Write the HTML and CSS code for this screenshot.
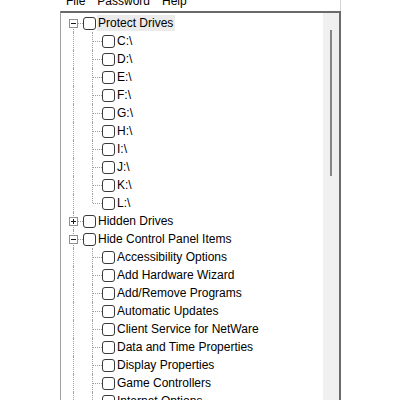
FILE: index.html
```html
<!DOCTYPE html>
<html>
<head>
<meta charset="utf-8">
<link rel="stylesheet" href="styles.css">
</head>
<body>
<div class="window">
  <div class="menubar">
    <div class="menu-inner"><span class="mi">File</span><span class="mi">Password</span><span class="mi">Help</span></div>
  </div>
  <div class="tree">
    <div class="nodes">
      <div class="row"><span class="g exp first"><i class="box minus"></i></span><span class="cb"></span><span class="lbl sel">Protect Drives</span></div>
      <div class="row"><span class="g v"></span><span class="g tee"></span><span class="cb"></span><span class="lbl">C:\</span></div>
      <div class="row"><span class="g v"></span><span class="g tee"></span><span class="cb"></span><span class="lbl">D:\</span></div>
      <div class="row"><span class="g v"></span><span class="g tee"></span><span class="cb"></span><span class="lbl">E:\</span></div>
      <div class="row"><span class="g v"></span><span class="g tee"></span><span class="cb"></span><span class="lbl">F:\</span></div>
      <div class="row"><span class="g v"></span><span class="g tee"></span><span class="cb"></span><span class="lbl">G:\</span></div>
      <div class="row"><span class="g v"></span><span class="g tee"></span><span class="cb"></span><span class="lbl">H:\</span></div>
      <div class="row"><span class="g v"></span><span class="g tee"></span><span class="cb"></span><span class="lbl">I:\</span></div>
      <div class="row"><span class="g v"></span><span class="g tee"></span><span class="cb"></span><span class="lbl">J:\</span></div>
      <div class="row"><span class="g v"></span><span class="g tee"></span><span class="cb"></span><span class="lbl">K:\</span></div>
      <div class="row"><span class="g v"></span><span class="g elbow"></span><span class="cb"></span><span class="lbl">L:\</span></div>
      <div class="row"><span class="g exp mid"><i class="box plus"></i></span><span class="cb"></span><span class="lbl">Hidden Drives</span></div>
      <div class="row"><span class="g exp mid"><i class="box minus"></i></span><span class="cb"></span><span class="lbl">Hide Control Panel Items</span></div>
      <div class="row"><span class="g v"></span><span class="g tee"></span><span class="cb"></span><span class="lbl">Accessibility Options</span></div>
      <div class="row"><span class="g v"></span><span class="g tee"></span><span class="cb"></span><span class="lbl">Add Hardware Wizard</span></div>
      <div class="row"><span class="g v"></span><span class="g tee"></span><span class="cb"></span><span class="lbl">Add/Remove Programs</span></div>
      <div class="row"><span class="g v"></span><span class="g tee"></span><span class="cb"></span><span class="lbl">Automatic Updates</span></div>
      <div class="row"><span class="g v"></span><span class="g tee"></span><span class="cb"></span><span class="lbl">Client Service for NetWare</span></div>
      <div class="row"><span class="g v"></span><span class="g tee"></span><span class="cb"></span><span class="lbl">Data and Time Properties</span></div>
      <div class="row"><span class="g v"></span><span class="g tee"></span><span class="cb"></span><span class="lbl">Display Properties</span></div>
      <div class="row"><span class="g v"></span><span class="g tee"></span><span class="cb"></span><span class="lbl">Game Controllers</span></div>
      <div class="row"><span class="g v"></span><span class="g tee"></span><span class="cb"></span><span class="lbl">Internet Options</span></div>
    </div>
    <div class="scroll"><div class="thumb"></div></div>
  </div>
</div>
</body>
</html>
```
FILE: styles.css
```css
html, body {
  margin: 0;
  padding: 0;
  background: #ffffff;
  height: 400px;
  overflow: hidden;
}
body {
  font-family: "Liberation Sans", Arial, sans-serif;
  font-size: 12px;
  color: #000;
}
.window {
  margin-left: 60px;
  width: 281px;
  height: 400px;
  display: flex;
  flex-direction: column;
}
.menubar {
  height: 11px;
  overflow: hidden;
  border-right: 1px solid #d4d4d4;
  box-sizing: border-box;
  background: #fff;
}
.menu-inner {
  margin-top: -6px;
  line-height: 15px;
  display: flex;
}
.mi {
  padding: 0 6px;
}
.tree {
  flex: 1;
  display: flex;
  border-top: 2px solid #6a6a6a;
  border-left: 1px solid #a0a0a0;
  border-right: 2px solid #6a6a6a;
  overflow: hidden;
}
.nodes {
  flex: 1;
  padding-left: 3px;
  padding-top: 1px;
  display: flex;
  flex-direction: column;
}
.row {
  height: 18px;
  display: flex;
  align-items: flex-start;
  flex: none;
}
.g {
  width: 19px;
  height: 18px;
  position: relative;
  flex: none;
}
.g::before, .g::after {
  content: "";
  position: absolute;
}
.g.v::before, .g.tee::before, .g.exp.mid::before {
  left: 9px; top: 0; height: 18px;
  border-left: 1px dotted #a0a0a0;
}
.g.elbow::before {
  left: 9px; top: 0; height: 9px;
  border-left: 1px dotted #a0a0a0;
}
.g.exp.first::before {
  left: 9px; top: 10px; height: 8px;
  border-left: 1px dotted #a0a0a0;
}
.g.v::after { display: none; }
.g.tee::after, .g.elbow::after, .g.exp::after {
  left: 10px; right: 0; top: 9px;
  border-top: 1px dotted #a0a0a0;
}
.box {
  position: absolute;
  left: 5px;
  top: 5px;
  width: 9px;
  height: 9px;
  box-sizing: border-box;
  border: 1px solid #919191;
  background: #fff;
  z-index: 1;
}
.box::before, .box::after {
  content: "";
  position: absolute;
  background: #1a1a1a;
}
.box::before {
  left: 1px; top: 3px; width: 5px; height: 1px;
}
.box.plus::after {
  left: 3px; top: 1px; width: 1px; height: 5px;
}
.cb {
  width: 13px;
  height: 13px;
  box-sizing: border-box;
  border: 1px solid #3a3a3a;
  border-radius: 3px;
  background: #fff;
  margin-top: 3px;
  flex: none;
}
.lbl {
  margin-top: 1px;
  margin-left: 1px;
  line-height: 16px;
  padding: 0 2px 0 1px;
  white-space: nowrap;
}
.lbl.sel {
  background: #ebebeb;
}
.scroll {
  width: 16px;
  flex: none;
  background: #f0f0f0;
}
.thumb {
  margin: 17px 0 0 7px;
  width: 2px;
  height: 146px;
  background: #858585;
}
```
